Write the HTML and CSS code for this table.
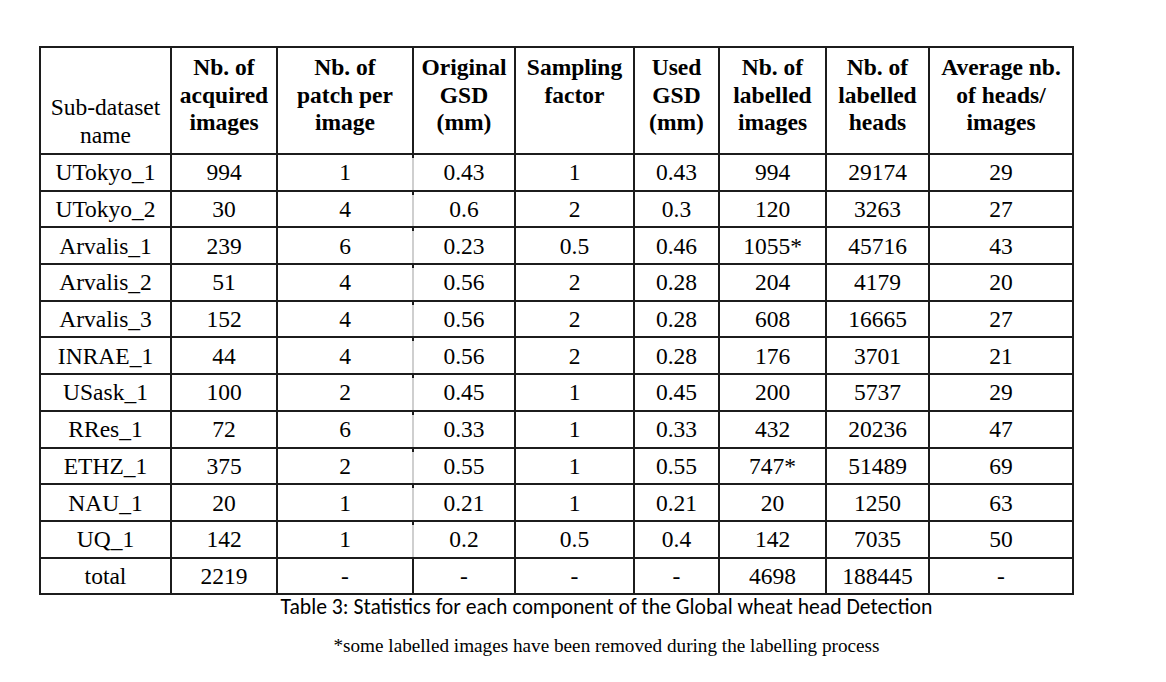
FILE: index.html
```html
<!DOCTYPE html>
<html>
<head>
<meta charset="utf-8">
<link rel="stylesheet" href="styles.css">
</head>
<body>
<div class="page">
  <table class="stats">
    <colgroup>
      <col class="c1"><col class="c2"><col class="c3"><col class="c4"><col class="c5"><col class="c6"><col class="c7"><col class="c8"><col class="c9">
    </colgroup>
    <thead>
      <tr class="head">
        <th class="first">Sub-dataset<br>name</th>
        <th>Nb. of<br>acquired<br>images</th>
        <th>Nb. of<br>patch per<br>image</th>
        <th>Original<br>GSD<br>(mm)</th>
        <th>Sampling<br>factor</th>
        <th>Used<br>GSD<br>(mm)</th>
        <th>Nb. of<br>labelled<br>images</th>
        <th>Nb. of<br>labelled<br>heads</th>
        <th>Average nb.<br>of heads/<br>images</th>
      </tr>
    </thead>
    <tbody>
      <tr><td>UTokyo_1</td><td>994</td><td class="gr">1</td><td class="gl">0.43</td><td>1</td><td>0.43</td><td>994</td><td>29174</td><td>29</td></tr>
      <tr><td>UTokyo_2</td><td>30</td><td class="gr">4</td><td class="gl">0.6</td><td>2</td><td>0.3</td><td>120</td><td>3263</td><td>27</td></tr>
      <tr><td>Arvalis_1</td><td>239</td><td class="gr">6</td><td class="gl">0.23</td><td>0.5</td><td>0.46</td><td>1055*</td><td>45716</td><td>43</td></tr>
      <tr><td>Arvalis_2</td><td>51</td><td class="gr">4</td><td class="gl">0.56</td><td>2</td><td>0.28</td><td>204</td><td>4179</td><td>20</td></tr>
      <tr><td>Arvalis_3</td><td>152</td><td class="gr">4</td><td class="gl">0.56</td><td>2</td><td>0.28</td><td>608</td><td>16665</td><td>27</td></tr>
      <tr><td>INRAE_1</td><td>44</td><td class="gr">4</td><td class="gl">0.56</td><td>2</td><td>0.28</td><td>176</td><td>3701</td><td>21</td></tr>
      <tr><td>USask_1</td><td>100</td><td class="gr">2</td><td class="gl">0.45</td><td>1</td><td>0.45</td><td>200</td><td>5737</td><td>29</td></tr>
      <tr><td>RRes_1</td><td>72</td><td class="gr">6</td><td class="gl">0.33</td><td>1</td><td>0.33</td><td>432</td><td>20236</td><td>47</td></tr>
      <tr><td>ETHZ_1</td><td>375</td><td class="gr">2</td><td class="gl">0.55</td><td>1</td><td>0.55</td><td>747*</td><td>51489</td><td>69</td></tr>
      <tr><td>NAU_1</td><td>20</td><td class="gr">1</td><td class="gl">0.21</td><td>1</td><td>0.21</td><td>20</td><td>1250</td><td>63</td></tr>
      <tr><td>UQ_1</td><td>142</td><td class="gr">1</td><td class="gl">0.2</td><td>0.5</td><td>0.4</td><td>142</td><td>7035</td><td>50</td></tr>
      <tr><td>total</td><td>2219</td><td>-</td><td>-</td><td>-</td><td>-</td><td>4698</td><td>188445</td><td>-</td></tr>
    </tbody>
  </table>
  <p class="caption">Table 3: Statistics for each component of the Global wheat head Detection</p>
  <p class="note">*some labelled images have been removed during the labelling process</p>
</div>
</body>
</html>
```
FILE: styles.css
```css
html, body {
  margin: 0;
  padding: 0;
  background: #ffffff;
}

.page {
  padding: 46px 0 0 39px;
  width: 1127px;
}

.stats {
  border-collapse: collapse;
  table-layout: fixed;
  width: 1033px;
  font-family: "Liberation Serif", "Times New Roman", serif;
  font-size: 23.5px;
  color: #000;
}

.c1 { width: 131px; }
.c2 { width: 106px; }
.c3 { width: 136px; }
.c4 { width: 102px; }
.c5 { width: 119px; }
.c6 { width: 85px; }
.c7 { width: 107px; }
.c8 { width: 103px; }
.c9 { width: 144px; }

.stats th,
.stats td {
  border: 2px solid #1c1c1c;
  text-align: center;
  padding: 0;
}

.head {
  height: 107px;
}

.stats th {
  font-weight: bold;
  vertical-align: top;
  line-height: 27.5px;
  padding-top: 6px;
}

.stats th.first {
  font-weight: normal;
  vertical-align: bottom;
  padding-top: 0;
  padding-bottom: 4px;
}

.stats tbody tr {
  height: 36.7px;
}

.stats td {
  vertical-align: middle;
  line-height: 26px;
}

.stats td.gr {
  border-right-color: #cfcfcf;
}

.stats td.gl {
  border-left-color: #cfcfcf;
  position: relative;
}

.stats td.gl::before {
  content: "";
  position: absolute;
  left: -2px;
  top: -1px;
  width: 2px;
  height: 4px;
  background: #1c1c1c;
}

.caption {
  margin: 0;
  width: 1135px;
  text-align: center;
  font-family: "Carlito", "Calibri", "Lato", sans-serif;
  font-size: 21.7px;
  line-height: 24px;
  color: #000;
}

.note {
  margin: 16px 0 0 0;
  width: 1135px;
  text-align: center;
  font-family: "Liberation Serif", "Times New Roman", serif;
  font-size: 19.2px;
  line-height: 22px;
  color: #000;
}
```
